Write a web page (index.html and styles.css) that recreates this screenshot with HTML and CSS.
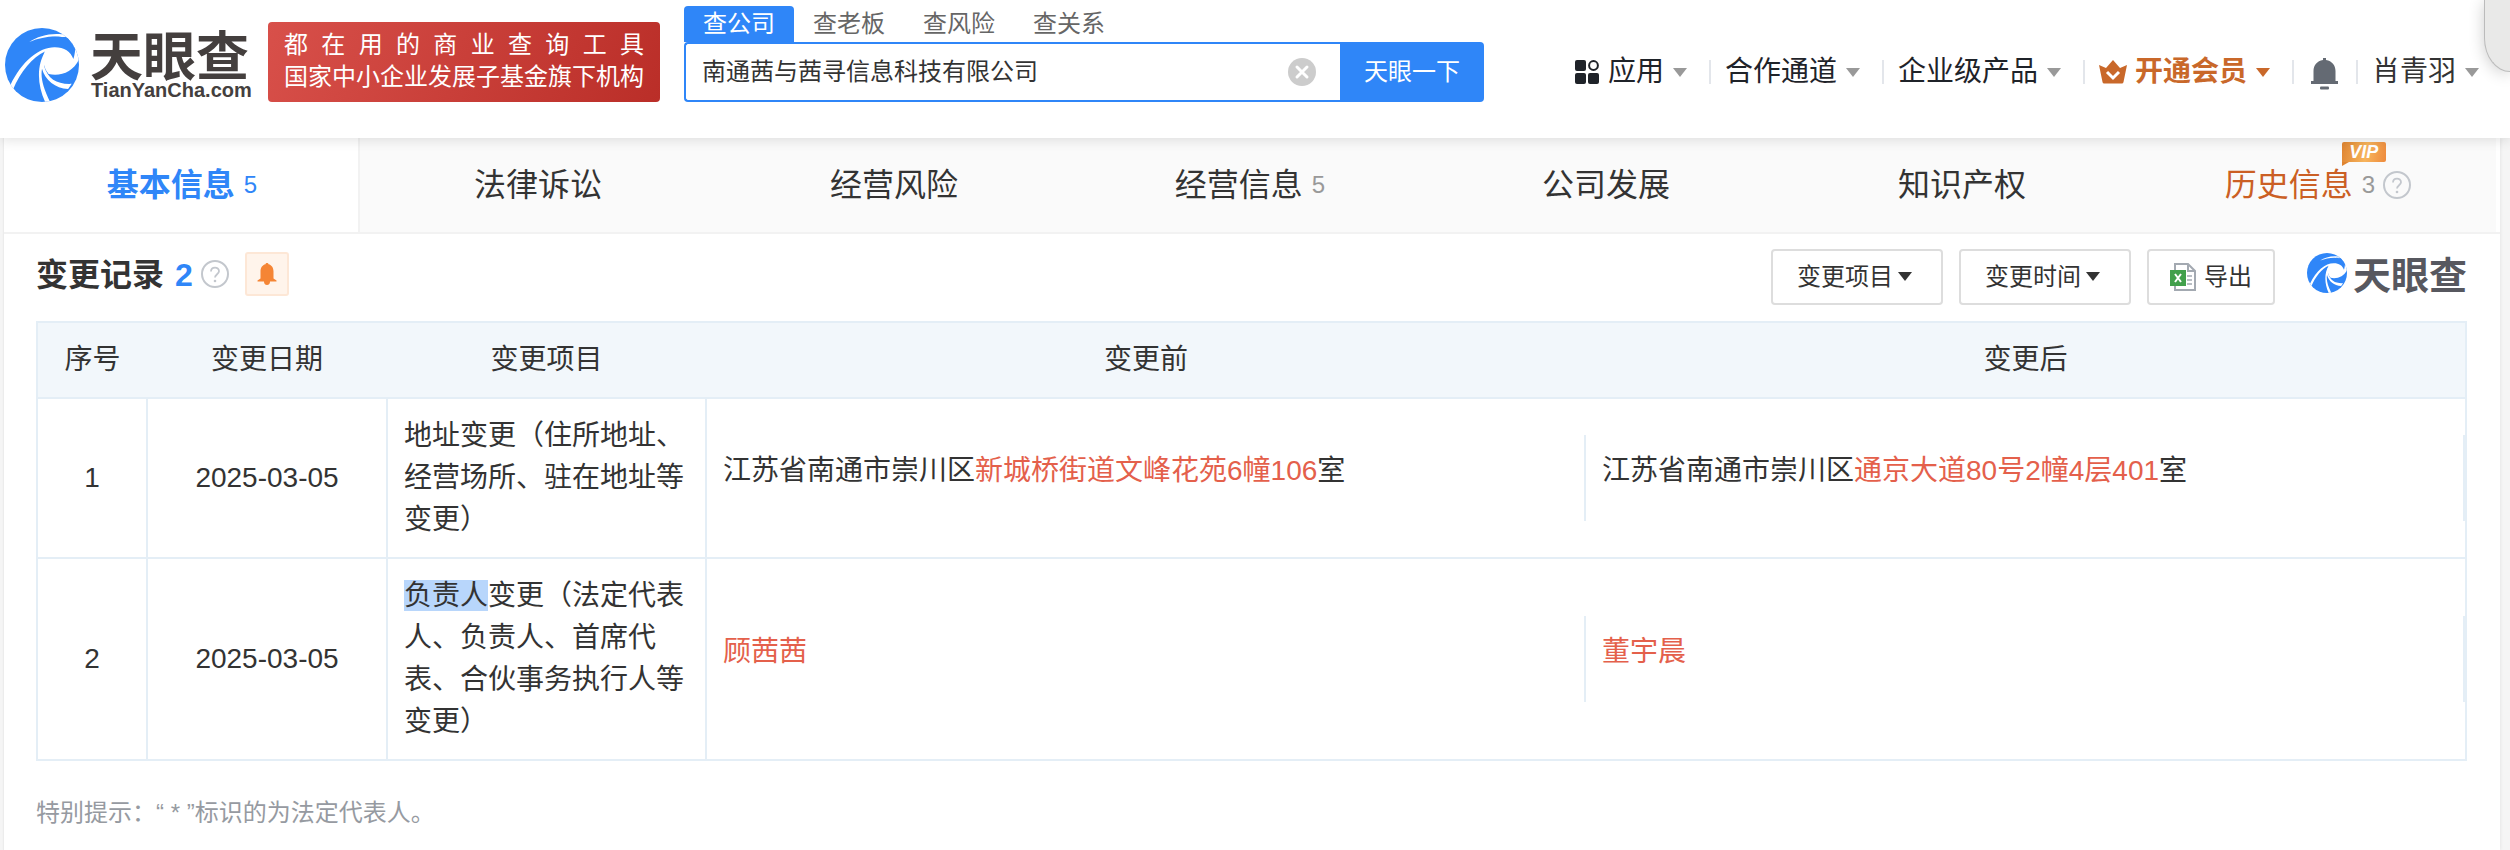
FILE: index.html
```html
<!DOCTYPE html>
<html lang="zh-CN">
<head>
<meta charset="utf-8">
<title>变更记录 - 天眼查</title>
<meta name="viewport" content="width=device-width, initial-scale=1">
<link rel="stylesheet" href="styles.css">
</head>
<body>
<svg class="sprite" aria-hidden="true">
  <symbol id="swirl" viewBox="14 35 224 224">
    <clipPath id="disc"><circle cx="126" cy="147" r="112"/></clipPath>
    <g clip-path="url(#disc)">
      <rect x="14" y="35" width="224" height="224" fill="#2f86f8"/>
      <path fill="#fff" d="M88 77C112 60 150 50 186 54L194 35L240 60L204 66C170 56 125 62 88 77Z"/>
      <path fill="#2f86f8" d="M150 62C185 58 215 68 226 98L238 98L215 68L200 62Z"/>
      <path fill="#fff" d="M228 94C225 108 225 118 221 129C213 106 193 93 165 93C118 92 66 134 30 208L38 222C60 168 98 122 135 106C127 124 127 152 146 174C182 182 220 168 238 130L250 130L250 94Z"/>
      <path fill="#fff" d="M137 104C108 150 112 210 137 262L152 262C130 218 121 186 126 158C136 194 166 216 205 220L216 204C172 206 144 190 132 150Z"/>
    </g>
  </symbol>
  <symbol id="help" viewBox="0 0 28 28">
    <circle cx="14" cy="14" r="13" fill="none" stroke="#c3c7cd" stroke-width="2"/>
    <path d="M10 11.500C10 6.500 18 6.500 18 11.200C18 14 14 14.500 14 17.500" fill="none" stroke="#c3c7cd" stroke-width="1.800"/>
    <circle cx="14" cy="21" r="1.300" fill="#c3c7cd"/>
  </symbol>
  <symbol id="caret" viewBox="0 0 14 9"><path d="M0 0H14L7 9Z" fill="currentColor"/></symbol>
</svg>

<header class="header">
  <a class="brand" href="#">
    <svg class="brand-mark"><use href="#swirl"/></svg>
    <span class="brand-text">
      <span class="brand-name">天眼查</span>
      <span class="brand-domain">TianYanCha.com</span>
    </span>
  </a>
  <div class="slogan">
    <div class="slogan-wide">都 在 用 的 商 业 查 询 工 具</div>
    <div>国家中小企业发展子基金旗下机构</div>
  </div>
  <form class="search" onsubmit="return false">
    <div class="search-tabs">
      <button type="button" class="search-tab search-tab-on">查公司</button>
      <button type="button" class="search-tab">查老板</button>
      <button type="button" class="search-tab">查风险</button>
      <button type="button" class="search-tab">查关系</button>
    </div>
    <div class="search-bar">
      <div class="search-field">
        <input class="search-input" type="text" aria-label="搜索公司" value="南通茜与茜寻信息科技有限公司">
        <button type="button" class="search-clear" aria-label="清除">
          <svg viewBox="0 0 28 28"><circle cx="14" cy="14" r="14" fill="#ccc"/><path d="M9 9L19 19M19 9L9 19" stroke="#fff" stroke-width="3" stroke-linecap="round"/></svg>
        </button>
      </div>
      <button type="submit" class="search-go">天眼一下</button>
    </div>
  </form>
  <nav class="nav">
    <a class="nav-item nav-first" href="#">
      <svg class="icon-apps" viewBox="0 0 24 24"><g fill="#1f2329"><rect width="11" height="11" rx="2"/><rect y="13" width="11" height="11" rx="2"/><rect x="13" y="13" width="11" height="11" rx="2"/></g><circle cx="18.500" cy="5.500" r="4.400" fill="none" stroke="#1f2329" stroke-width="2"/></svg>
      应用<svg class="caret"><use href="#caret"/></svg></a>
    <a class="nav-item" href="#">合作通道<svg class="caret"><use href="#caret"/></svg></a>
    <a class="nav-item" href="#">企业级产品<svg class="caret"><use href="#caret"/></svg></a>
    <a class="nav-item nav-vip" href="#">
      <svg class="icon-crown" viewBox="0 0 28 24"><path d="M0 5L7 8L14 0L21 8L28 5L24.500 22Q24.300 23.500 22.800 23.500H5.200Q3.700 23.500 3.500 22Z" fill="#c9682a"/><path d="M8 12L14 18L20 12" fill="none" stroke="#fff" stroke-width="3"/></svg>
      开通会员<svg class="caret"><use href="#caret"/></svg></a>
    <a class="nav-item nav-bell" href="#" aria-label="消息">
      <svg viewBox="0 0 27 32"><path d="M12 0H15V2C21 3 24.500 7.500 24.500 13V23H27V26H0V23H2.500V13C2.500 7.500 6 3 12 2Z" fill="#646a73"/><rect x="9" y="28.500" width="9" height="3" rx="1" fill="#646a73"/></svg>
    </a>
    <a class="nav-item nav-user" href="#">肖青羽<svg class="caret"><use href="#caret"/></svg></a>
  </nav>
  <div class="corner"></div>
</header>

<main class="page">
  <nav class="tabs">
    <a class="tab tab-on" href="#"><b>基本信息</b><span class="tab-count">5</span></a>
    <a class="tab" href="#">法律诉讼</a>
    <a class="tab" href="#">经营风险</a>
    <a class="tab" href="#">经营信息<span class="tab-count">5</span></a>
    <a class="tab" href="#">公司发展</a>
    <a class="tab" href="#">知识产权</a>
    <a class="tab tab-history" href="#">
      <span class="tab-label">历史信息<span class="vip">VIP</span></span><span class="tab-count">3</span>
      <svg class="help"><use href="#help"/></svg>
    </a>
  </nav>

  <section class="section">
    <div class="section-head">
      <h2 class="title">变更记录</h2>
      <span class="title-count">2</span>
      <svg class="help"><use href="#help"/></svg>
      <button type="button" class="monitor" aria-label="监控">
        <svg viewBox="0 0 20 22"><path d="M10 0C11 0 11.500 .6 11.500 1.300C14.800 2 16.500 5 16.500 8.500V15.500L19.500 17.500V18.500H.5V17.500L3.500 15.500V8.500C3.500 5 5.200 2 8.500 1.300C8.500 .6 9 0 10 0ZM7 18.500H13C13 20.500 12 22 10 22S7 20.500 7 18.500Z" fill="#f58535"/></svg>
      </button>
      <div class="tools">
        <div class="picker"><select class="tool" aria-label="变更项目"><option>变更项目</option></select><svg class="picker-caret"><use href="#caret"/></svg></div>
        <div class="picker"><select class="tool" aria-label="变更时间"><option>变更时间</option></select><svg class="picker-caret"><use href="#caret"/></svg></div>
        <button type="button" class="tool tool-export">
          <svg viewBox="0 0 26 28"><path d="M5 1H18L25 8V27H5Z" fill="#fff" stroke="#a3a9b1" stroke-width="2"/><path d="M18 1V8H25" fill="none" stroke="#a3a9b1" stroke-width="2"/><path d="M17 13H22M17 17H22M17 21H22" stroke="#a3a9b1" stroke-width="1.500"/><rect y="7" width="16" height="16" fill="#42a04c"/><path d="M5 11L11 19M11 11L5 19" stroke="#fff" stroke-width="2"/></svg>
          导出
        </button>
      </div>
      <div class="watermark"><svg><use href="#swirl"/></svg><span>天眼查</span></div>
    </div>

    <table class="records">
      <colgroup><col class="c-no"><col class="c-date"><col class="c-item"><col><col></colgroup>
      <thead>
        <tr><th>序号</th><th>变更日期</th><th>变更项目</th><th>变更前</th><th>变更后</th></tr>
      </thead>
      <tbody>
        <tr>
          <td>1</td><td>2025-03-05</td>
          <td class="item">地址变更（住所地址、经营场所、驻在地址等变更）</td>
          <td class="diff"><div>江苏省南通市崇川区<em>新城桥街道文峰花苑6幢106</em>室</div></td>
          <td class="diff"><div>江苏省南通市崇川区<em>通京大道80号2幢4层401</em>室</div></td>
        </tr>
        <tr>
          <td>2</td><td>2025-03-05</td>
          <td class="item"><mark>负责人</mark>变更（法定代表人、负责人、首席代表、合伙事务执行人等变更）</td>
          <td class="diff"><div><em>顾茜茜</em></div></td>
          <td class="diff"><div><em>董宇晨</em></div></td>
        </tr>
      </tbody>
    </table>
    <p class="note">特别提示：“ * ”标识的为法定代表人。</p>
  </section>
</main>
</body>
</html>
```
FILE: styles.css
```css
* { box-sizing: border-box; }

body {
  margin: 0;
  min-height: 100vh;
  display: flex;
  flex-direction: column;
  overflow: hidden;
  background: #f5f5f5;
  color: #333;
  font-family: "Liberation Sans", "Noto Sans CJK SC", sans-serif;
  font-size: 28px;
  line-height: 1.2;
}

a { color: inherit; text-decoration: none; }
button, input, select { font: inherit; color: inherit; margin: 0; }
button { border: 0; padding: 0; background: none; cursor: pointer; }
svg { display: block; flex: none; }
.sprite { position: absolute; width: 0; height: 0; }

/* header */
.header {
  position: relative;
  z-index: 1;
  display: flex;
  align-items: flex-end;
  padding: 6px 31px 36px 5px;
  background: #fff;
  box-shadow: 0 2px 12px rgba(0, 0, 0, 0.12);
}

.brand { display: flex; align-items: center; gap: 11px; width: 263px; color: #443f3e; }
.brand-mark { width: 74px; height: 74px; }
.brand-text { display: flex; flex-direction: column; }
.brand-name { font-family: "Noto Sans CJK SC", sans-serif; font-weight: 700; font-size: 53px; line-height: 50px; }
.brand-domain { font-weight: 700; font-size: 20px; line-height: 24px; padding-left: 1px; }

.slogan {
  flex: none;
  width: 392px;
  padding: 7px 16px 9px;
  border-radius: 4px;
  background: linear-gradient(115deg, #d8504a, #ba2e28);
  color: #fff;
  font-size: 24px;
  line-height: 32px;
  white-space: nowrap;
}
.slogan-wide { text-align-last: justify; }

.search { flex: 0 1 800px; margin-left: 24px; font-size: 24px; }
.search-tabs { display: flex; }
.search-tab { width: 110px; height: 36px; color: #666; border-radius: 4px 4px 0 0; }
.search-tab-on { background: #2f86f8; color: #fff; }
.search-bar { display: flex; height: 60px; }
.search-field {
  flex: 1;
  display: flex;
  align-items: center;
  padding-right: 24px;
  border: 2px solid #2f86f8;
  border-right: 0;
  border-radius: 4px 0 0 4px;
}
.search-input { flex: 1; min-width: 0; border: 0; outline: 0; padding: 0 16px; background: none; }
.search-clear { width: 28px; height: 28px; }
.search-go { width: 144px; background: #2f86f8; color: #fff; border-radius: 0 4px 4px 0; }

.nav { display: flex; align-items: center; height: 60px; margin-left: auto; color: #1f2329; white-space: nowrap; }
.nav-item { display: flex; align-items: center; height: 24px; padding: 0 22px 0 14px; border-left: 2px solid #e3e6eb; }
.nav-first { border-left: 0; }
.icon-apps { width: 24px; height: 24px; margin-right: 9px; }
.icon-crown { width: 28px; height: 24px; margin-right: 8px; }
.caret { width: 14px; height: 9px; margin-left: 9px; color: #999; }
.nav-vip, .nav-vip .caret { color: #c9682a; }
.nav-vip { font-weight: 700; }
.nav-bell { padding: 0 18px 0 17px; }
.nav-bell svg { width: 27px; height: 32px; margin-top: 4px; }
.nav-user { padding-right: 0; color: #333; }

.corner {
  position: absolute;
  top: 0;
  right: 0;
  width: 26px;
  height: 72px;
  border-left: 1px solid #bbb;
  border-bottom: 1px solid #bbb;
  border-bottom-left-radius: 26px 34px;
  background: #e9e9e8;
  box-shadow: 0 2px 16px rgba(0, 0, 0, 0.2);
}

/* page */
.page {
  flex: 1;
  margin: 0 10px 0 3px;
  border-left: 1px solid #ececec;
  background: #fff;
  box-shadow: 1px 0 3px rgba(0, 0, 0, 0.06);
}

.tabs { display: flex; padding-right: 4px; border-bottom: 2px solid #f2f2f2; }
.tab {
  flex: 1;
  display: flex;
  align-items: center;
  justify-content: center;
  height: 94px;
  background: #fafafa;
  font-size: 32px;
  white-space: nowrap;
}
.tab-on { background: #fff; color: #2f86f8; box-shadow: inset -2px 0 #f2f2f2; }
.tab-count { margin-left: 9px; font-size: 24px; color: #999; }
.tab-on .tab-count { color: inherit; }
.tab-history { color: #cb5f24; }
.tab-label { position: relative; }
.help { width: 28px; height: 28px; margin-left: 8px; }

.vip {
  position: absolute;
  right: -33px;
  top: -24px;
  width: 44px;
  height: 20px;
  border-radius: 2px 2px 2px 0;
  background: linear-gradient(100deg, #df8430, #f7b45c 55%, #ee8a3c);
  color: #fff;
  font-size: 18px;
  font-style: italic;
  font-weight: 700;
  line-height: 20px;
  text-align: center;
}
.vip::after {
  content: "";
  position: absolute;
  left: 0;
  top: 20px;
  border-top: 4px solid #df8430;
  border-right: 7px solid transparent;
}

.section { padding: 15px 33px 0 32px; }
.section-head { display: flex; align-items: center; height: 56px; margin-bottom: 16px; }
.title { margin: 0 0 4px; font-size: 32px; }
.title-count { margin: 0 0 4px 11px; color: #2f86f8; font-size: 32px; font-weight: 700; }
.section-head .help { margin-bottom: 6px; }
.monitor {
  display: grid;
  place-items: center;
  width: 44px;
  height: 44px;
  margin: 0 0 6px 16px;
  border: 2px solid #fde7d6;
  border-radius: 3px;
  background: #fff4eb;
}
.monitor svg { width: 20px; height: 22px; }

.tools { display: flex; gap: 16px; margin-left: auto; font-size: 24px; }
.tool { height: 56px; border: 2px solid #ddd; border-radius: 4px; background: #fff; }
.picker { position: relative; width: 172px; }
.picker .tool { width: 100%; padding: 0 24px; appearance: none; outline: 0; }
.picker-caret { position: absolute; right: 31px; top: 23px; width: 14px; height: 9px; pointer-events: none; }
.tool-export { display: flex; align-items: center; gap: 8px; padding: 0 21px; }
.tool-export svg { width: 26px; height: 28px; }

.watermark {
  display: flex;
  align-items: center;
  gap: 6px;
  margin: -8px 0 0 32px;
  color: #57585f;
  font: 700 38px/40px "Noto Sans CJK SC", sans-serif;
}
.watermark svg { width: 40px; height: 40px; }

.records { width: 100%; table-layout: fixed; border-collapse: collapse; border: 2px solid #e4eef6; line-height: 42px; }
.c-no { width: 110px; }
.c-date { width: 240px; }
.c-item { width: 319px; }
.records th { padding: 16px; background: #f2f7fb; font-weight: 400; border-bottom: 2px solid #e4eef6; }
.records td { padding: 16px 15px; text-align: center; border: 2px solid #e4eef6; border-width: 2px 0 2px 2px; }
.records .item { text-align: left; padding-left: 16px; }
.records .diff { padding: 0; text-align: left; }
.records .diff + .diff { border-left: 0; }
.diff div { padding: 15px 16px 29px; border-right: 2px solid #e4eef6; }
.records em { font-style: normal; color: #e4604b; }
mark { background: #b8d6fb; color: inherit; }
.note { margin: 34px 0 0; font-size: 24px; line-height: 36px; color: #969aa1; }
```
